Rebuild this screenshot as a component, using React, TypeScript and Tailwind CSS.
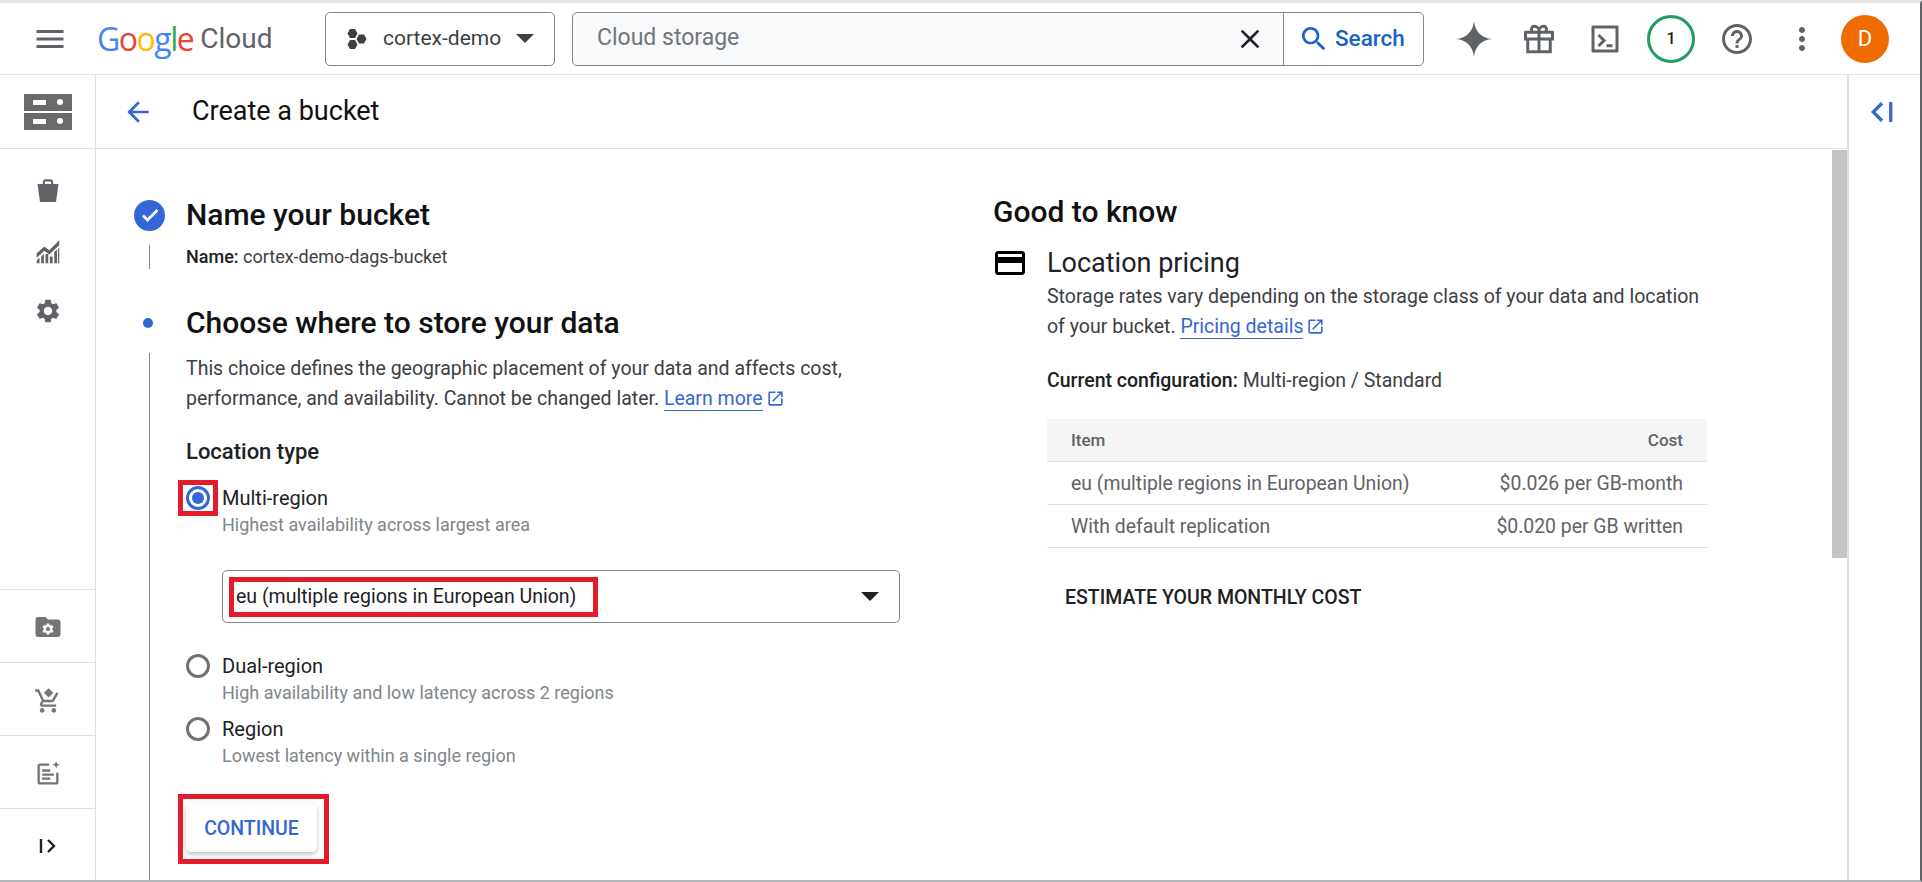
import React from 'react'

const P = {
  menu: 'M3 18h18v-2H3v2zm0-5h18v-2H3v2zm0-7v2h18V6H3z',
  back: 'M20 11H7.83l5.59-5.59L12 4l-8 8 8 8 1.41-1.41L7.83 13H20v-2z',
  search:
    'M15.5 14h-.79l-.28-.27C15.41 12.59 16 11.11 16 9.5 16 5.91 13.09 3 9.5 3S3 5.91 3 9.5 5.91 16 9.5 16c1.61 0 3.09-.59 4.23-1.57l.27.28v.79l5 4.99L20.49 19l-4.99-5zm-6 0C7.01 14 5 11.99 5 9.5S7.01 5 9.5 5 14 7.01 14 9.5 11.99 14 9.5 14z',
  close:
    'M19 6.41L17.59 5 12 10.59 6.41 5 5 6.41 10.59 12 5 17.59 6.41 19 12 13.41 17.59 19 19 17.59 13.41 12z',
  more: 'M12 8c1.1 0 2-.9 2-2s-.9-2-2-2-2 .9-2 2 .9 2 2 2zm0 2c-1.1 0-2 .9-2 2s.9 2 2 2 2-.9 2-2-.9-2-2-2zm0 6c-1.1 0-2 .9-2 2s.9 2 2 2 2-.9 2-2-.9-2-2-2z',
  help: 'M11 18h2v-2h-2v2zm1-16C6.48 2 2 6.48 2 12s4.48 10 10 10 10-4.48 10-10S17.52 2 12 2zm0 18c-4.41 0-8-3.59-8-8s3.59-8 8-8 8 3.59 8 8-3.59 8-8 8zm0-14c-2.21 0-4 1.79-4 4h2c0-1.1.9-2 2-2s2 .9 2 2c0 2-3 1.75-3 5h2c0-2.25 3-2.5 3-5 0-2.21-1.79-4-4-4z',
  gear: 'M19.14 12.94c.04-.3.06-.61.06-.94 0-.32-.02-.64-.07-.94l2.03-1.58c.18-.14.23-.41.12-.61l-1.92-3.32c-.12-.22-.37-.29-.59-.22l-2.39.96c-.5-.38-1.03-.7-1.62-.94l-.36-2.54c-.04-.24-.24-.41-.48-.41h-3.84c-.24 0-.43.17-.47.41l-.36 2.54c-.59.24-1.13.57-1.62.94l-2.39-.96c-.22-.08-.47 0-.59.22L2.74 8.87c-.12.21-.08.47.12.61l2.03 1.58c-.05.3-.09.63-.09.94s.02.64.07.94l-2.03 1.58c-.18.14-.23.41-.12.61l1.92 3.32c.12.22.37.29.59.22l2.39-.96c.5.38 1.03.7 1.62.94l.36 2.54c.05.24.24.41.48.41h3.84c.24 0 .44-.17.47-.41l.36-2.54c.59-.24 1.13-.56 1.62-.94l2.39.96c.22.08.47 0 .59-.22l1.92-3.32c.12-.22.07-.47-.12-.61l-2.01-1.58zM12 15.6c-1.98 0-3.6-1.62-3.6-3.6s1.62-3.6 3.6-3.6 3.6 1.62 3.6 3.6-1.62 3.6-3.6 3.6z',
  card: 'M20 4H4c-1.11 0-1.99.89-1.99 2L2 18c0 1.11.89 2 2 2h16c1.11 0 2-.89 2-2V6c0-1.11-.89-2-2-2zm0 14H4v-6h16v6zm0-10H4V6h16v2z',
  open: 'M19 19H5V5h7V3H5c-1.11 0-2 .9-2 2v14c0 1.1.89 2 2 2h14c1.1 0 2-.9 2-2v-7h-2v7zM14 3v2h3.59l-9.83 9.83 1.41 1.41L19 6.41V10h2V3h-7z',
  spark: 'M12 0C12.6 7 17 11.4 24 12 17 12.6 12.6 17 12 24 11.4 17 7 12.6 0 12 7 11.4 11.4 7 12 0z',
  gift: 'M21 6.500h-3.100c.1-.3.1-.6.1-.9C18 3.900 16.700 2.500 15 2.500c-1.200 0-2.300.7-3 1.700-.7-1-1.800-1.700-3-1.700-1.700 0-3 1.400-3 3.100 0 .3 0 .6.1.9H3c-.6 0-1 .4-1 1V13h1.500v8.500h17V13H22V7.500c0-.6-.4-1-1-1zM15 4.500c.6 0 1 .5 1 1.100s-.4.9-1 .9h-2V6c0-.8.9-1.500 2-1.500zM9 4.500c1.100 0 2 .7 2 1.500v.5H9c-.6 0-1-.3-1-.9s.4-1.100 1-1.100zM4 8.500h7V11H4V8.500zm1.500 4.500H11v6.500H5.500V13zM18.500 19.500H13V13h5.500v6.500zM20 11h-7V8.500h7V11z',
  terminal:
    'M20 3H4c-.6 0-1 .4-1 1v16c0 .6.4 1 1 1h16c.6 0 1-.4 1-1V4c0-.6-.4-1-1-1zm-1 16H5V5h14v14zM7 10l1.400-1.400L12.800 13l-4.400 4.400L7 16l3-3-3-3zm6 5.500h4v2h-4v-2z',
  bucket: 'M7.500 6V4.500C7.500 3.100 8.600 2 10 2h4c1.400 0 2.500 1.100 2.500 2.500V6H21l-2 14.500c-.1.6-.6 1-1.200 1H6.200c-.6 0-1.100-.4-1.200-1L3 6h4.500zm1.800 0h5.400V4.500c0-.4-.3-.7-.7-.7h-4c-.4 0-.7.3-.7.7V6z',
  chart: 'M3 13 9 7.500l4 3L21 2.500v4l-8 7.500-4-3-6 5.500v-3.500zM3 18.500l2.200-2V21H3v-2.500zM6.500 15.500l2.200-2V21H6.500v-5.500zM10 13.500h2.200V21H10v-7.500zM13.500 15.500h2.200V21h-2.200v-5.500zM17 12l2.200-2V21H17v-9zM20 9.500l1-1V21h-1V9.500z',
  folder:
    'M20 6h-8l-2-2H4c-1.100 0-2 .9-2 2v12c0 1.100.9 2 2 2h16c1.100 0 2-.9 2-2V8c0-1.100-.9-2-2-2z',
  cart: 'M7 18c-1.100 0-2 .9-2 2s.9 2 2 2 2-.9 2-2-.9-2-2-2zm10 0c-1.100 0-2 .9-2 2s.9 2 2 2 2-.9 2-2-.9-2-2-2zM1 2v2h2l3.600 7.600L5.200 14c-.7 1.300.2 3 1.800 3h12v-2H7l1.100-2h7.400c.8 0 1.400-.4 1.800-1L21 5.500l-1.800-1-3.700 6.500H8.500L4.300 2H1zM12.500 1l4 4-4 4-4-4 4-4z',
  notes:
    'M13 3H5c-1.100 0-2 .9-2 2v14c0 1.100.9 2 2 2h14c1.100 0 2-.9 2-2v-8h-2v8H5V5h8V3zM7 8h7v2H7V8zm0 3.500h10v2H7v-2zM7 15h7v2H7v-2zM19 1l.9 2.100L22 4l-2.100.9L19 7l-.9-2.100L16 4l2.100-.9L19 1z',
}

function Icon({ d, className }: { d: string; className?: string }) {
  return (
    <svg viewBox="0 0 24 24" className={className} fill="currentColor">
      <path d={d} />
    </svg>
  )
}

function Radio({ checked }: { checked?: boolean }) {
  return (
    <div
      className={`flex h-6 w-6 shrink-0 items-center justify-center rounded-full border-[3px] ${
        checked ? 'border-[#3367d6]' : 'border-[#6f7377]'
      }`}
    >
      {checked && <div className="h-3 w-3 rounded-full bg-[#3367d6]" />}
    </div>
  )
}

function RailIcon({ d, className }: { d: string; className?: string }) {
  return (
    <div className="flex h-[73px] items-center justify-center border-t border-[#e0e0e0] pt-[4px]">
      <Icon d={d} className={className} />
    </div>
  )
}

function PriceRow({ item, cost }: { item: string; cost: string }) {
  return (
    <div className="flex h-[43px] items-center justify-between border-b border-[#e0e0e0] px-6 pt-[2px] text-[19.4px] text-[#5f6368]">
      <span>{item}</span>
      <span>{cost}</span>
    </div>
  )
}

export default function App() {
  return (
    <div className="flex h-[882px] w-full flex-col overflow-hidden border-t-[3px] border-r-2 border-b-2 border-t-[#e3e3e3] border-r-[#5f6368] border-b-[#b4b9bd] bg-white font-['Roboto',sans-serif] text-[#202124]">
      {/* top bar */}
      <header className="flex h-[72px] shrink-0 items-center border-b border-[#e0e0e0]">
        <Icon d={P.menu} className="ml-[32px] h-9 w-9 text-[#5f6368]" />
        <div className="ml-[29px] flex w-[175px] items-center text-[32px] leading-none font-['Open_Sans',sans-serif]">
          <span className="tracking-[-1.5px]">
            <span className="text-[#4285f4]">G</span>
            <span className="text-[#ea4335]">o</span>
            <span className="text-[#fbbc04]">o</span>
            <span className="text-[#4285f4]">g</span>
            <span className="text-[#34a853]">l</span>
            <span className="text-[#ea4335]">e</span>
          </span>
          <span className="ml-[7px] font-['Roboto',sans-serif] text-[28px] text-[#5f6368]">Cloud</span>
        </div>
        <div className="ml-[53px] flex h-[54px] w-[230px] items-center rounded-[5px] border border-[#80868b] pl-[20px] pr-[20px]">
          <svg viewBox="0 0 20 24" className="h-6 w-[22px] text-[#3c4043]" fill="currentColor">
            <path d="M3 2l5 0 2.500 4.500L8 11H3L.5 6.500zM3 13h5l2.500 4.500L8 22H3L.5 17.500zM12 7.500h5l2.500 4.500-2.500 4.500h-5L9.500 12z" />
          </svg>
          <span className="ml-[15px] text-[21px] text-[#3c4043]">cortex-demo</span>
          <div className="ml-auto h-0 w-0 border-x-[9px] border-t-[9px] border-x-transparent border-t-[#3c4043]" />
        </div>
        <div className="ml-[17px] flex h-[54px] w-[852px] items-center rounded-[5px] border border-[#80868b] bg-[#f8f9fa]">
          <span className="ml-[24px] text-[23px] text-[#70757a]">Cloud storage</span>
          <Icon d={P.close} className="ml-auto h-8 w-8 text-[#202124]" />
          <div className="ml-[17px] h-full w-px bg-[#80868b]" />
          <div className="flex h-full w-[139px] items-center rounded-r-[5px] bg-white pl-[14px] text-[#1a62c9]">
            <Icon d={P.search} className="h-8 w-8" />
            <span className="ml-[5px] text-[22.500px] font-medium">Search</span>
          </div>
        </div>
        <Icon d={P.spark} className="ml-[32px] h-9 w-9 text-[#5f6368]" />
        <Icon d={P.gift} className="ml-[29px] h-9 w-9 text-[#5f6368]" />
        <Icon d={P.terminal} className="ml-[30px] h-9 w-9 text-[#5f6368]" />
        <div className="ml-[24px] flex h-12 w-12 items-center justify-center rounded-full border-[3px] border-[#1e9e63] text-[16px] font-medium">
          1
        </div>
        <Icon d={P.help} className="ml-[24px] h-9 w-9 text-[#5f6368]" />
        <Icon d={P.more} className="ml-[29px] h-9 w-9 text-[#5f6368]" />
        <div className="ml-[21px] flex h-12 w-12 items-center justify-center rounded-full bg-[#ef6c00] text-[22px] text-white">
          D
        </div>
      </header>

      <div className="flex min-h-0 flex-1">
        {/* left rail */}
        <nav className="flex w-[96px] shrink-0 flex-col border-r border-[#e0e0e0]">
          <div className="flex h-[73px] flex-col items-center justify-center gap-[2px]">
            <div className="flex h-[17px] w-12 items-center justify-between bg-[#6a6a6a] px-[9px]">
              <div className="h-[5px] w-[13px] bg-white" />
              <div className="h-[6px] w-[6px] rounded-full bg-white" />
            </div>
            <div className="flex h-[17px] w-12 items-center justify-between bg-[#6a6a6a] px-[9px]">
              <div className="h-[5px] w-[13px] bg-white" />
              <div className="h-[6px] w-[6px] rounded-full bg-white" />
            </div>
          </div>
          <div className="flex flex-1 flex-col items-center border-t border-[#e0e0e0] pt-[28px] text-[#5f6368]">
            <Icon d={P.bucket} className="h-7 w-7" />
            <Icon d={P.chart} className="mt-[32px] h-[30px] w-[30px]" />
            <Icon d={P.gear} className="mt-[30px] h-7 w-7" />
          </div>
          <div className="relative flex h-[73px] items-center justify-center border-t border-[#e0e0e0] pt-[2px]">
            <Icon d={P.folder} className="h-[30px] w-[30px] text-[#757575]" />
            <Icon d={P.gear} className="absolute left-[41px] top-[32px] h-[14px] w-[14px] text-white" />
          </div>
          <RailIcon d={P.cart} className="h-[28px] w-[28px] text-[#757575]" />
          <RailIcon d={P.notes} className="h-[28px] w-[28px] text-[#757575]" />
          <div className="flex h-[72px] items-center justify-center border-t border-[#e0e0e0] pt-[2px]">
            <svg viewBox="0 0 24 24" className="h-6 w-6 text-[#202124]" fill="none" stroke="currentColor" strokeWidth="2.400">
              <path d="M5 5v14M12 6l6 6-6 6" />
            </svg>
          </div>
        </nav>

        {/* center */}
        <div className="flex min-w-0 flex-1 flex-col">
          <div className="flex h-[74px] shrink-0 items-center border-b border-[#e0e0e0]">
            <Icon d={P.back} className="ml-[26px] h-8 w-8 text-[#3367d6]" />
            <h1 className="ml-[38px] text-[27px] font-normal text-[#111]">Create a bucket</h1>
          </div>

          <div className="flex min-h-0 flex-1">
            <main className="flex min-w-0 flex-1">
              {/* stepper column */}
              <section className="flex w-[898px] shrink-0 flex-col pt-[49px]">
                <div className="flex h-[34px] items-center">
                  <div className="ml-[38px] flex h-[31px] w-[31px] items-center justify-center rounded-full bg-[#3367d6]">
                    <svg viewBox="0 0 24 24" className="h-6 w-6 text-white" fill="none" stroke="currentColor" strokeWidth="2.800">
                      <path d="M5 12.500l4.500 4.500L19.500 7" />
                    </svg>
                  </div>
                  <h2 className="ml-[21px] text-[30px] font-medium leading-[34px] text-[#111]">Name your bucket</h2>
                </div>
                <div className="ml-[53px] mt-[13px] h-6 border-l border-[#80868b] pl-[36px] text-[18px] leading-6 text-[#3c4043]">
                  <span className="font-medium text-[#202124]">Name:</span> cortex-demo-dags-bucket
                </div>
                <div className="mt-[37px] flex h-[34px] items-center">
                  <div className="ml-[47px] h-[10px] w-[10px] rounded-full bg-[#3367d6]" />
                  <h2 className="ml-[33px] text-[30px] font-medium leading-[34px] text-[#111]">Choose where to store your data</h2>
                </div>
                <div className="ml-[53px] mt-[13px] flex-1 border-l border-[#80868b] pl-[36px]">
                  <p className="pt-px text-[19.500px] leading-[30px] text-[#3c4043]">
                    This choice defines the geographic placement of your data and affects cost,
                    <br />
                    performance, and availability. Cannot be changed later.{' '}
                    <span className="border-b border-[#3367d6] text-[#3367d6]">Learn more</span>
                    <Icon d={P.open} className="ml-[3px] inline h-[19px] w-[19px] align-[-3px] text-[#3367d6]" />
                  </p>
                  <h3 className="mt-[24px] text-[22px] font-medium leading-7 text-[#202124]">Location type</h3>

                  <div className="mt-[20px] flex items-center">
                    <div className="relative">
                      <Radio checked />
                      <div className="absolute -inset-x-[8px] -inset-y-[6px] border-[5px] border-[#e31c2c]" />
                    </div>
                    <span className="ml-[12px] text-[20px] leading-6">Multi-region</span>
                  </div>
                  <div className="ml-[36px] mt-[3px] text-[18px] leading-6 text-[#80868b]">Highest availability across largest area</div>

                  <div className="ml-[36px] mt-[33px] flex h-[53px] w-[678px] items-center rounded-[5px] border border-[#80868b] pl-[13px] pr-[20px]">
                    <div className="relative text-[19.500px] leading-6 text-[#202124]">
                      eu (multiple regions in European Union)
                      <div className="absolute -left-[7px] -top-[8px] -bottom-[8px] w-[369px] border-[5px] border-[#e31c2c]" />
                    </div>
                    <div className="ml-auto h-0 w-0 border-x-[9px] border-t-[9px] border-x-transparent border-t-[#202124]" />
                  </div>

                  <div className="mt-[31px] flex items-center">
                    <Radio />
                    <span className="ml-[12px] text-[20px] leading-6">Dual-region</span>
                  </div>
                  <div className="ml-[36px] mt-[3px] text-[18px] leading-6 text-[#80868b]">High availability and low latency across 2 regions</div>

                  <div className="mt-[12px] flex items-center">
                    <Radio />
                    <span className="ml-[12px] text-[20px] leading-6">Region</span>
                  </div>
                  <div className="ml-[36px] mt-[3px] text-[18px] leading-6 text-[#80868b]">Lowest latency within a single region</div>

                  <div className="relative mt-[36px] h-12 w-[131px]">
                    <button className="h-full w-full rounded-[5px] bg-white pt-px text-[19.500px] font-medium text-[#3367d6] shadow-[0_2px_4px_rgba(60,64,67,0.35)]">
                      CONTINUE
                    </button>
                    <div className="absolute -left-[8px] -right-[12px] -top-[10px] -bottom-[12px] border-[5px] border-[#e31c2c]" />
                  </div>
                </div>
              </section>

              {/* good to know */}
              <aside className="flex w-[712px] flex-col pt-[46px]">
                <h2 className="-ml-px text-[30px] font-medium leading-[34px] text-[#111]">Good to know</h2>
                <div className="mt-[18px] flex h-8 items-center">
                  <Icon d={P.card} className="-ml-[2px] h-9 w-9 text-[#000000]" />
                  <span className="ml-[19px] text-[27px] leading-8 text-[#202124]">Location pricing</span>
                </div>
                <div className="ml-[53px] w-[660px]">
                  <p className="mt-[3px] text-[19.500px] leading-[30px] text-[#3c4043]">
                    Storage rates vary depending on the storage class of your data and location
                    <br />
                    of your bucket.{' '}
                    <span className="border-b border-[#3367d6] text-[#3367d6]">Pricing details</span>
                    <Icon d={P.open} className="ml-[3px] inline h-[19px] w-[19px] align-[-3px] text-[#3367d6]" />
                  </p>
                  <p className="mt-[24px] text-[19.500px] leading-[30px] text-[#3c4043]">
                    <span className="font-medium text-[#202124]">Current configuration:</span> Multi-region / Standard
                  </p>
                  <div className="mt-[23px] flex h-[43px] items-center justify-between border-b border-[#e0e0e0] bg-[#f5f5f5] px-6 pt-px text-[17px] font-medium text-[#5f6368]">
                    <span>Item</span>
                    <span>Cost</span>
                  </div>
                  <PriceRow item="eu (multiple regions in European Union)" cost="$0.026 per GB-month" />
                  <PriceRow item="With default replication" cost="$0.020 per GB written" />
                  <div className="ml-[18px] mt-[38px] text-[19.500px] font-medium leading-6 text-[#202124]">ESTIMATE YOUR MONTHLY COST</div>
                </div>
              </aside>
            </main>

            {/* scrollbar */}
            <div className="w-[15px] shrink-0 pt-px">
              <div className="h-[408px] bg-[#c4c4c4]" />
            </div>
          </div>
        </div>

        {/* right panel */}
        <div className="flex w-[73px] shrink-0 justify-center border-l-2 border-[#e0e0e0] pr-[6px] pt-[22px]">
          <svg viewBox="0 0 24 24" className="h-[30px] w-[30px] text-[#3367d6]" fill="none" stroke="currentColor" strokeWidth="2.600">
            <path d="M19 4v16M12 5l-7 7 7 7" />
          </svg>
        </div>
      </div>
    </div>
  )
}
